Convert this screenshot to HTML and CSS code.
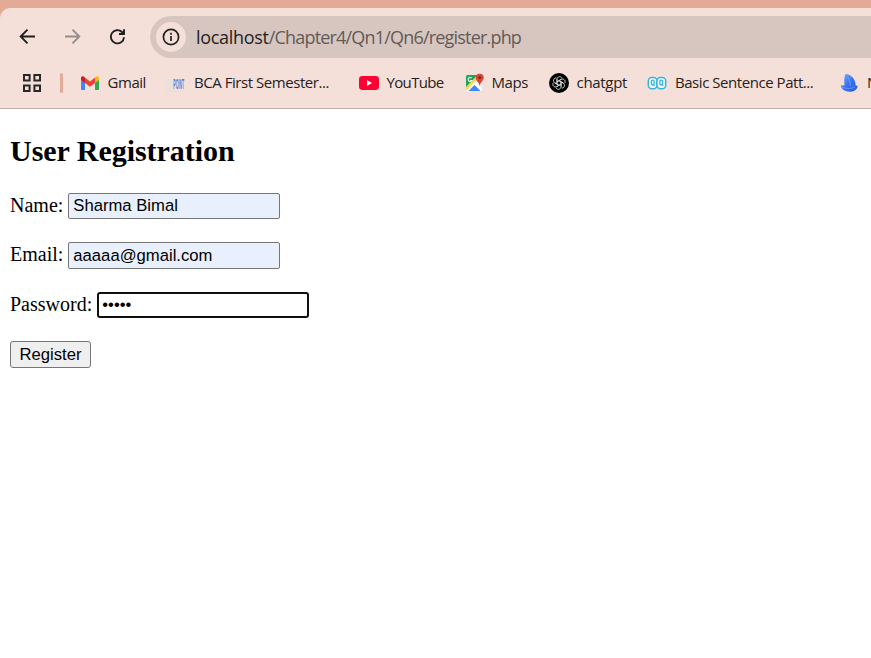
FILE: index.html
```html
<!DOCTYPE html>
<html lang="en">
<head>
<meta charset="utf-8">
<title>User Registration</title>
<link rel="stylesheet" href="styles.css">
</head>
<body>
<header class="frame">
  <div class="chrome">
    <div class="toolbar">
      <svg class="nav" viewBox="0 0 20 20"><path d="M17 9.500H3.500M9.500 2.700 2.700 9.500 9.500 16.300"/></svg>
      <svg class="nav nav-off" viewBox="0 0 20 20"><path d="M2 9.500H15.500M9.500 2.700 16.300 9.500 9.500 16.300"/></svg>
      <svg class="nav" viewBox="0 0 20 20"><path d="M16 10.200A6.600 6.600 0 1 1 14 5L15.500 6.500"/><path d="M16 2.200V7H11"/></svg>
      <div class="address">
        <span class="info"><svg viewBox="0 0 20 20"><circle cx="10" cy="10" r="7.6"/><path d="M10 9v5M10 5.800v2"/></svg></span>
        <span class="url"><span class="host">localhost</span>/Chapter4/Qn1/Qn6/register.php</span>
      </div>
    </div>
    <nav class="bookmarks">
      <svg class="apps" viewBox="0 0 20 20"><path d="M2 2h5.600v5.600H2zM12.400 2H18v5.600h-5.600zM2 12.400h5.600V18H2zM12.400 12.400H18V18h-5.600z"/></svg>
      <span class="divider"></span>
      <span class="bookmark gmail">
        <svg viewBox="0 0 20 20"><path fill="#4285f4" d="M1 5v11q0 1 1 1h3V8z"/><path fill="#34a853" d="M15 8v9h3q1 0 1-1V5z"/><path fill="#fbbc04" d="M15 5v5l4-3V5c0-2-2.200-2.400-3.400-1.200z"/><path fill="#c5221f" d="M5 5v5L1 7V5c0-2 2.200-2.400 3.400-1.200z"/><path fill="#ea4335" d="m5 4.500 5 4 5-4V10l-5 3.800L5 10z"/></svg>
        <span class="label">Gmail</span>
      </span>
      <span class="bookmark bca">
        <svg viewBox="0 0 20 20"><text class="logo" transform="translate(.7 15.500) scale(.235 1)"><tspan class="pale">BCA</tspan><tspan class="blue">POINT</tspan></text><path stroke="#e6dad9" d="M1 18h18"/></svg>
        <span class="label">BCA First Semester...</span>
      </span>
      <span class="bookmark youtube">
        <svg viewBox="0 0 20 20"><rect y="3" width="20" height="14" rx="3.400" fill="#ff0033"/><path fill="#fff" d="m8 7 5 3-5 3z"/></svg>
        <span class="label">YouTube</span>
      </span>
      <span class="bookmark maps">
        <svg viewBox="0 0 20 20"><path fill="#1fa35a" d="M2.500 2H14L1 16V3.500Q1 2 2.500 2"/><path fill="#eee" d="m10 9 7-1v10L9 10z"/><path fill="#fff" d="m1 15.500 8-8 8 8V18h-1.500L9.500 12 4 18H1z"/><path fill="#fdd844" d="M1 14 12 2.500l2 2L2 17H1z"/><path fill="#4285f4" d="m3.500 18 6-6 6 6z"/><path fill="none" stroke="#e9fff2" stroke-width="1.100" d="M6.700 5.200a2 2 0 1 0 .1 2.300H5.200"/><path fill="#db4437" d="M14.700.8a4 4 0 0 1 4 4c0 3-3.200 4.200-4 8-.8-3.800-4-5-4-8a4 4 0 0 1 4-4"/><circle cx="14.700" cy="4.700" r="1.400" fill="#7b231d"/></svg>
        <span class="label">Maps</span>
      </span>
      <span class="bookmark chatgpt">
        <svg viewBox="0 0 20 20"><circle cx="10" cy="10" r="10"/><g fill="none" stroke="#ddd" stroke-width=".85"><path id="petal" d="M8 11.200V6.300c0-3 4.300-3.500 5-1M8 8.800l4.300-2.500"/><use href="#petal" transform="rotate(60 10 10)"/><use href="#petal" transform="rotate(120 10 10)"/><use href="#petal" transform="rotate(180 10 10)"/><use href="#petal" transform="rotate(240 10 10)"/><use href="#petal" transform="rotate(300 10 10)"/></g></svg>
        <span class="label">chatgpt</span>
      </span>
      <span class="bookmark basic">
        <svg viewBox="0 0 20 20"><g fill="#f3fcff" stroke="#38b4dc" stroke-width="1.500"><rect x="1.300" y="4.500" width="8.700" height="11.200" rx="3.500"/><rect x="10" y="4.500" width="8.700" height="11.200" rx="3.500"/><g stroke-width="1.300"><rect x="4.400" y="7.200" width="2.800" height="4.800" rx="1.400"/><rect x="12.800" y="7.200" width="2.800" height="4.800" rx="1.400"/><path d="m6.500 11.500 1 1.500M15 11.500l1 1.500"/></g></g></svg>
        <span class="label">Basic Sentence Patt...</span>
      </span>
      <span class="bookmark last">
        <svg viewBox="0 0 20 20"><defs><linearGradient id="sail" x2="1" y2="1"><stop stop-color="#83b2fb"/><stop offset=".5" stop-color="#3972f2"/><stop offset="1" stop-color="#2457dc"/></linearGradient></defs><path fill="url(#sail)" d="M5.500 1c6 .5 10 5 10.200 11.500l2 .2c-.4 3.600-3.200 6-7.700 6-5 0-8.500-2.200-9.200-6.200L4.500 12.300C4 8.500 4 4 5.500 1"/><path stroke="#78a8ff" stroke-width=".7" fill="none" d="M7.500 4c2.500 3 3 6 2.500 9M2 14c4 2 9 2 13 0"/></svg>
        <span class="label">N</span>
      </span>
    </nav>
  </div>
</header>
<main class="page">
  <h2>User Registration</h2>
  <form>
    <div class="row"><label for="name">Name:</label><input class="filled" id="name" type="text" value="Sharma Bimal"></div>
    <div class="row"><label for="email">Email:</label><input class="filled tall" id="email" type="email" value="aaaaa@gmail.com"></div>
    <div class="row"><label for="password">Password:</label><input class="active" id="password" type="password" value="12345"></div>
    <button type="button">Register</button>
  </form>
</main>
</body>
</html>
```
FILE: styles.css
```css
* { box-sizing: border-box; }
body { margin: 0; height: 658px; overflow: hidden; background: #fff; font: 20px "Liberation Serif", serif; color: #000; }
.frame { background: #e3aa98; padding-top: 8px; overflow: hidden; }
.chrome { height: 101px; background: #f5e0d9; border-bottom: 1px solid #c8aea8; border-top-left-radius: 10px; padding-top: 8px; font-family: "Open Sans", sans-serif; color: #242223; }
.toolbar { height: 42px; display: flex; align-items: center; padding-left: 18px; }
.nav { width: 20px; height: 20px; flex: none; margin-right: 25px; fill: none; stroke: #1f1f1f; stroke-width: 1.9; }
.nav-off { stroke: #978b89; }
.nav:nth-of-type(3) { margin-right: 22px; }
.address { height: 42px; flex: 1; min-width: 0; display: flex; align-items: center; background: #d7c6bf; border-radius: 21px 0 0 21px; padding-left: 6px; }
.info { width: 30px; height: 30px; border-radius: 50%; background: #f5e0d9; display: grid; place-items: center; flex: none; }
.info svg { width: 20px; height: 20px; fill: none; stroke: #222; stroke-width: 1.7; }
.url { margin-left: 10px; font-size: 18px; line-height: 24px; letter-spacing: -.81px; white-space: nowrap; color: #635a58; }
.host { color: #242223; letter-spacing: -.3px; }
.bookmarks { height: 50px; display: flex; align-items: center; padding-left: 22px; white-space: nowrap; }
.apps { width: 20px; height: 20px; flex: none; fill: none; stroke: #282828; stroke-width: 2; }
.divider { width: 3px; height: 20px; margin: 0 17px 0 18px; border-radius: 2px; background: #e3aa98; flex: none; }
.bookmark { display: flex; align-items: center; flex: none; gap: 8px; }
.bookmark svg { width: 20px; height: 20px; flex: none; }
.label { font-size: 15px; line-height: 20px; letter-spacing: -.45px; padding-bottom: 2px; }
.gmail { width: 85px; gap: 7.5px; }
.bca { width: 194px; gap: 9px; }
.youtube { width: 106px; gap: 7.5px; }
.youtube .label { letter-spacing: -.65px; }
.maps { width: 84px; gap: 6.5px; }
.chatgpt { width: 98px; gap: 7.5px; }
.basic { width: 193px; }
.chatgpt .label { letter-spacing: -.3px; }
.last { gap: 7px; }
.logo { font: bold 15px "Liberation Sans", sans-serif; }
.pale { fill: #e5e0e5; }
.blue { fill: #4f82da; }
.page { padding: 25px 10px 0; }
h2 { margin: 0 0 24px; font-size: 30px; line-height: 34px; letter-spacing: -.03px; }
.row { height: 27px; margin-bottom: 22.6px; display: flex; align-items: center; }
.row label { line-height: 23px; margin-right: 5px; padding-bottom: 1px; }
input { width: 212px; height: 26px; padding: 1px 4px; border: 1px solid #767676; border-radius: 2px; font: 16.67px "Liberation Sans", sans-serif; color: #000; outline: 0; }
.filled { background: #e8f0fe; }
.tall { height: 27px; padding-top: 2px; }
.active { border: 2px solid #101010; border-radius: 3px; padding: 0 3px; }
button { display: block; width: 81px; height: 27px; padding: 1px 0 0; border: 1px solid #767676; border-radius: 3px; background: #efefef; font: 16.67px "Liberation Sans", sans-serif; color: #000; }
```
